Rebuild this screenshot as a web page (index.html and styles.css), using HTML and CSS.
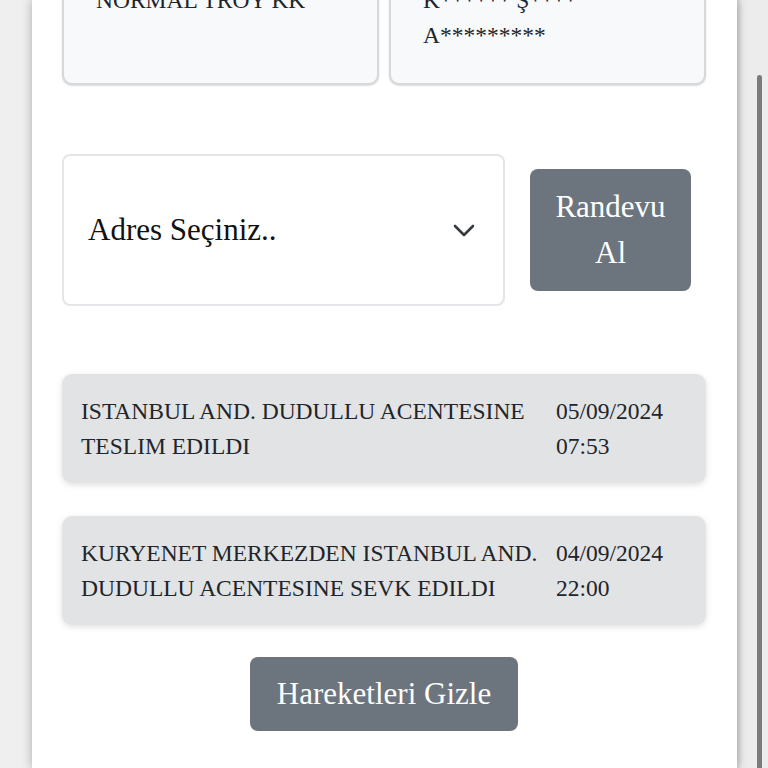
FILE: index.html
```html
<!DOCTYPE html>
<html lang="tr">
<head>
    <meta charset="UTF-8">
    <meta name="viewport" content="width=device-width, initial-scale=1.0">
    <title>Kargo Takip</title>
    <link rel="stylesheet" href="styles.css">
</head>
<body>
    <div class="side-left"></div>

    <main class="panel">
        <div class="info-grid">
            <div class="info-card">
                <div class="info-line">NORMAL TROY KK</div>
            </div>
            <div class="info-card">
                <div class="info-line">K****** Ş****</div>
                <div class="info-line">A*********</div>
            </div>
        </div>

        <div class="address-row">
            <div class="address-select">
                <span>Adres Seçiniz..</span>
                <svg class="chevron" width="22" height="14" viewBox="0 0 22 14">
                    <polyline points="2,2 11,11 20,2" fill="none" stroke="#343a40" stroke-width="2.6" stroke-linecap="round" stroke-linejoin="round"/>
                </svg>
            </div>
            <button class="btn btn-appointment">Randevu Al</button>
        </div>

        <div class="movements">
            <div class="movement">
                <div class="movement-text">ISTANBUL AND. DUDULLU ACENTESINE TESLIM EDILDI</div>
                <div class="movement-date">05/09/2024<br>07:53</div>
            </div>
            <div class="movement">
                <div class="movement-text">KURYENET MERKEZDEN ISTANBUL AND. DUDULLU ACENTESINE SEVK EDILDI</div>
                <div class="movement-date">04/09/2024<br>22:00</div>
            </div>
        </div>

        <div class="hide-row">
            <button class="btn btn-hide">Hareketleri Gizle</button>
        </div>
    </main>

    <div class="side-right">
        <div class="scroll-thumb"></div>
    </div>
</body>
</html>
```

FILE: styles.css
```css
/* page frame */
html, body {
    margin: 0;
    height: 768px;
    overflow: hidden;
}

body {
    display: flex;
    background: #efefef;
    font-family: "Liberation Serif", "Times New Roman", serif;
    color: #212529;
}

.side-left {
    width: 32px;
    flex: none;
}

.panel {
    width: 705px;
    flex: none;
    background: #fff;
    padding: 0 31px 0 30px;
    box-sizing: border-box;
    box-shadow: 0 0 10px rgba(0, 0, 0, 0.28);
    position: relative;
}

.side-right {
    flex: 1;
    padding: 75px 0 0 20px;
    background: linear-gradient(to right, #d6d6d6 0, #ececec 6px, #ececec 100%);
}

.scroll-thumb {
    width: 5px;
    height: 720px;
    background: #7b7b7b;
    border-radius: 3px;
}

/* top info cards (scrolled off) */
.info-grid {
    display: grid;
    grid-template-columns: 1fr 1fr;
    gap: 10px;
    margin-top: -38px;
}

.info-card {
    background: #f8f9fa;
    border: 2px solid #d6d8da;
    border-radius: 10px;
    padding: 19px 32px 30px;
    box-shadow: 0 1px 2px rgba(0, 0, 0, 0.14);
    font-size: 23.5px;
    line-height: 35px;
}

/* address + appointment */
.address-row {
    display: flex;
    align-items: center;
    margin-top: 69px;
}

.address-select {
    width: 443px;
    height: 152px;
    box-sizing: border-box;
    border: 2px solid #e3e5e8;
    border-radius: 8px;
    display: flex;
    align-items: center;
    justify-content: space-between;
    padding: 0 28px 0 24px;
    font-size: 31px;
    color: #111;
}

.chevron {
    margin-top: 2px;
}

.btn {
    font-family: inherit;
    border: none;
    background: #6c757d;
    color: #fff;
    font-size: 31px;
    line-height: 46.5px;
    border-radius: 8px;
}

.btn-appointment {
    width: 161px;
    margin-left: 25px;
    padding: 14.5px 20px;
}

/* movements list */
.movements {
    margin-top: 68px;
    display: flex;
    flex-direction: column;
    gap: 33px;
}

.movement {
    background: #e2e3e5;
    border-radius: 10px;
    padding: 19.5px 19px;
    display: grid;
    grid-template-columns: 1fr 131px;
    gap: 15px;
    font-size: 23.5px;
    line-height: 35px;
    box-shadow: 0 2px 6px rgba(0, 0, 0, 0.12);
}

.hide-row {
    display: flex;
    justify-content: center;
    margin-top: 32px;
}

.btn-hide {
    padding: 13.5px 27px;
}
```
